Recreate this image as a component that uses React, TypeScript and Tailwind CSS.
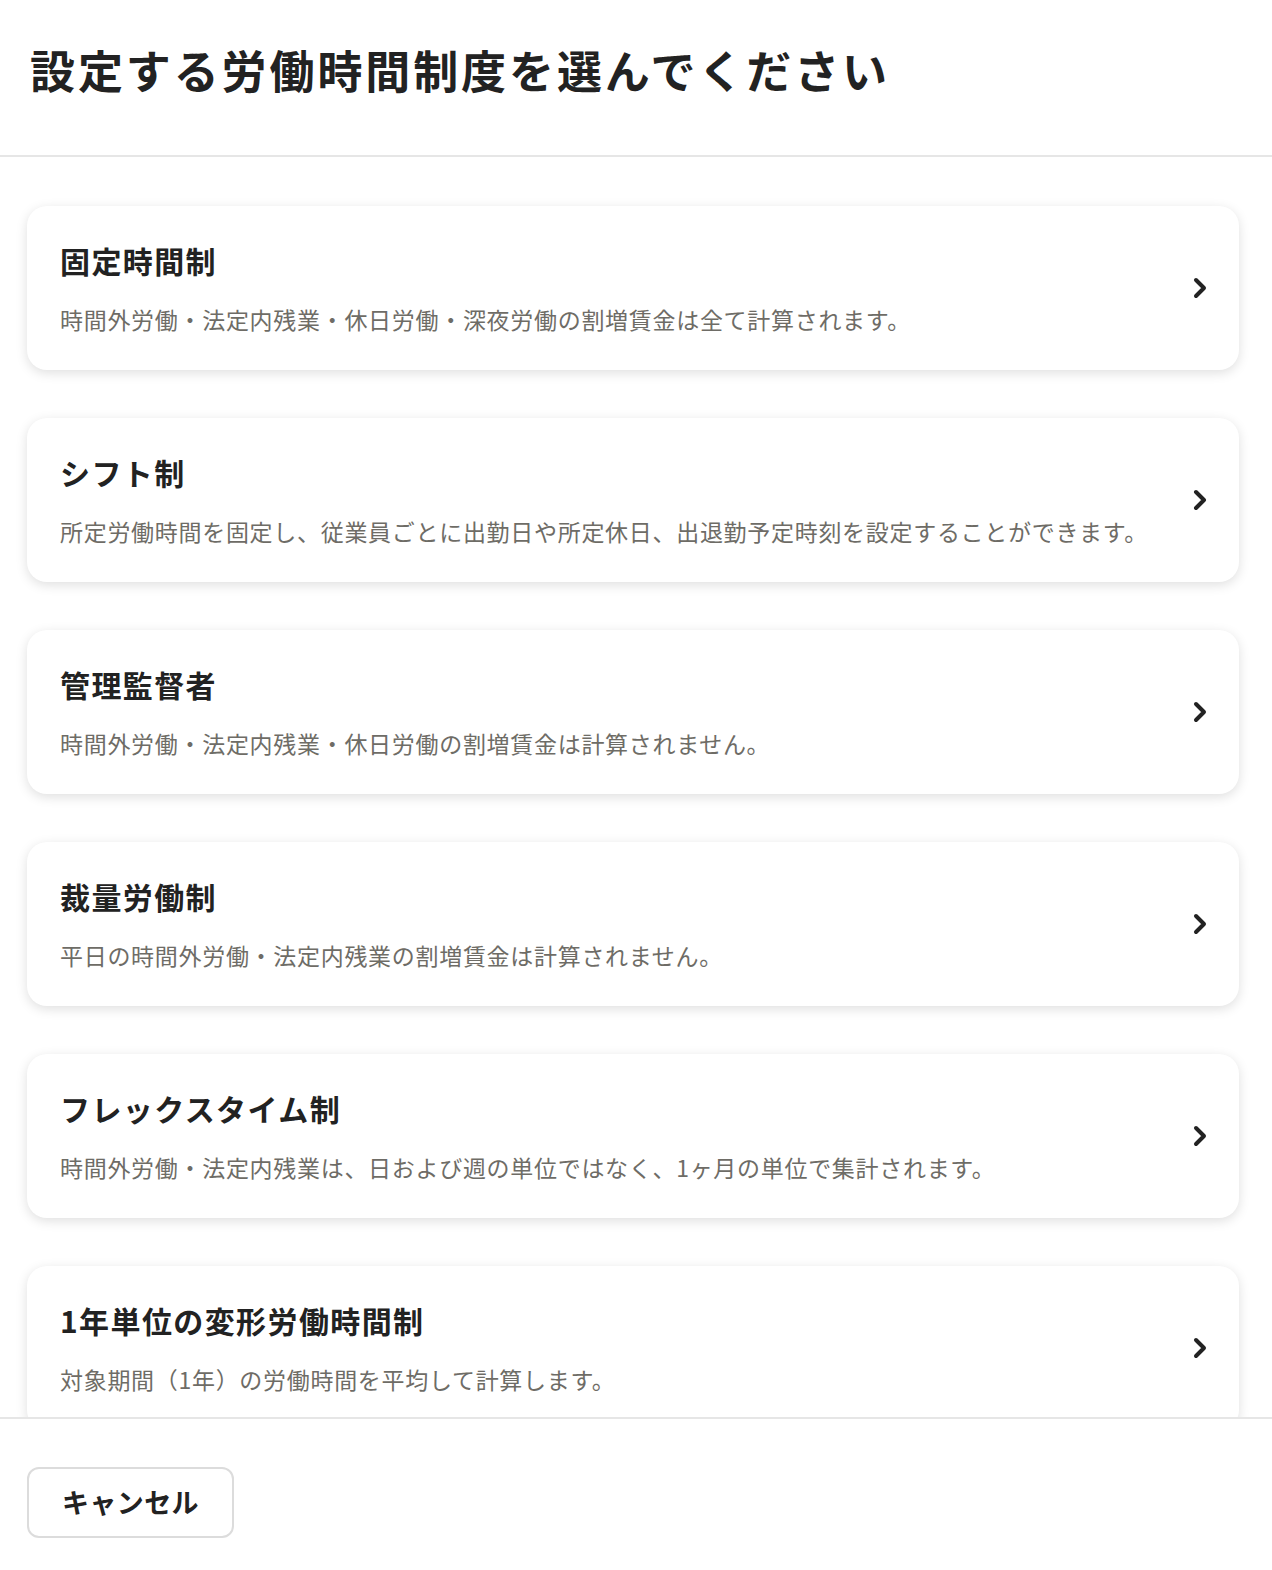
import { ChevronRight } from "lucide-react";

const options = [
  {
    title: "固定時間制",
    desc: "時間外労働・法定内残業・休日労働・深夜労働の割増賃金は全て計算されます。",
  },
  {
    title: "シフト制",
    desc: "所定労働時間を固定し、従業員ごとに出勤日や所定休日、出退勤予定時刻を設定することができます。",
  },
  {
    title: "管理監督者",
    desc: "時間外労働・法定内残業・休日労働の割増賃金は計算されません。",
  },
  {
    title: "裁量労働制",
    desc: "平日の時間外労働・法定内残業の割増賃金は計算されません。",
  },
  {
    title: "フレックスタイム制",
    desc: "時間外労働・法定内残業は、日および週の単位ではなく、1ヶ月の単位で集計されます。",
  },
  {
    title: "1年単位の変形労働時間制",
    desc: "対象期間（1年）の労働時間を平均して計算します。",
  },
];

const font = {
  fontFamily: '"Noto Sans CJK JP", "Noto Sans", sans-serif',
};

export default function App() {
  return (
    <div className="flex h-[1570px] w-full flex-col bg-white text-[#222]" style={font}>
      {/* Header */}
      <header className="flex h-[157px] shrink-0 items-center border-b-2 border-[#e6e6e6] pb-[16px] pl-[30px]">
        <h1 className="text-[45px] font-bold leading-none tracking-[2.9px]">
          設定する労働時間制度を選んでください
        </h1>
      </header>

      {/* Options */}
      <main className="flex-1 overflow-hidden">
        <div className="flex flex-col gap-[48px] pl-[27px] pr-[33px] pt-[49px]">
          {options.map((o) => (
            <button
              key={o.title}
              className="flex h-[164px] w-full shrink-0 items-center justify-between rounded-[20px] bg-white pl-[33px] pr-[23px] text-left shadow-[0_3px_12px_rgba(0,0,0,0.13)]"
            >
              <div className="flex flex-col">
                <span className="text-[30px] font-bold leading-none tracking-[1.4px] text-[#222]">
                  {o.title}
                </span>
                <span className="mt-[33px] text-[23px] leading-none tracking-[0.7px] text-[#6e6c66]">
                  {o.desc}
                </span>
              </div>
              <ChevronRight className="h-[32px] w-[32px] text-[#222]" strokeWidth={3} />
            </button>
          ))}
        </div>
      </main>

      {/* Footer */}
      <footer className="flex h-[153px] shrink-0 items-start border-t-2 border-[#e6e6e6] pl-[27px] pt-[48px]">
        <button className="h-[71px] w-[207px] rounded-[12px] border-2 border-[#dcdcdc] bg-white text-[27px] font-bold tracking-[0.4px] text-[#222]">
          キャンセル
        </button>
      </footer>
    </div>
  );
}
